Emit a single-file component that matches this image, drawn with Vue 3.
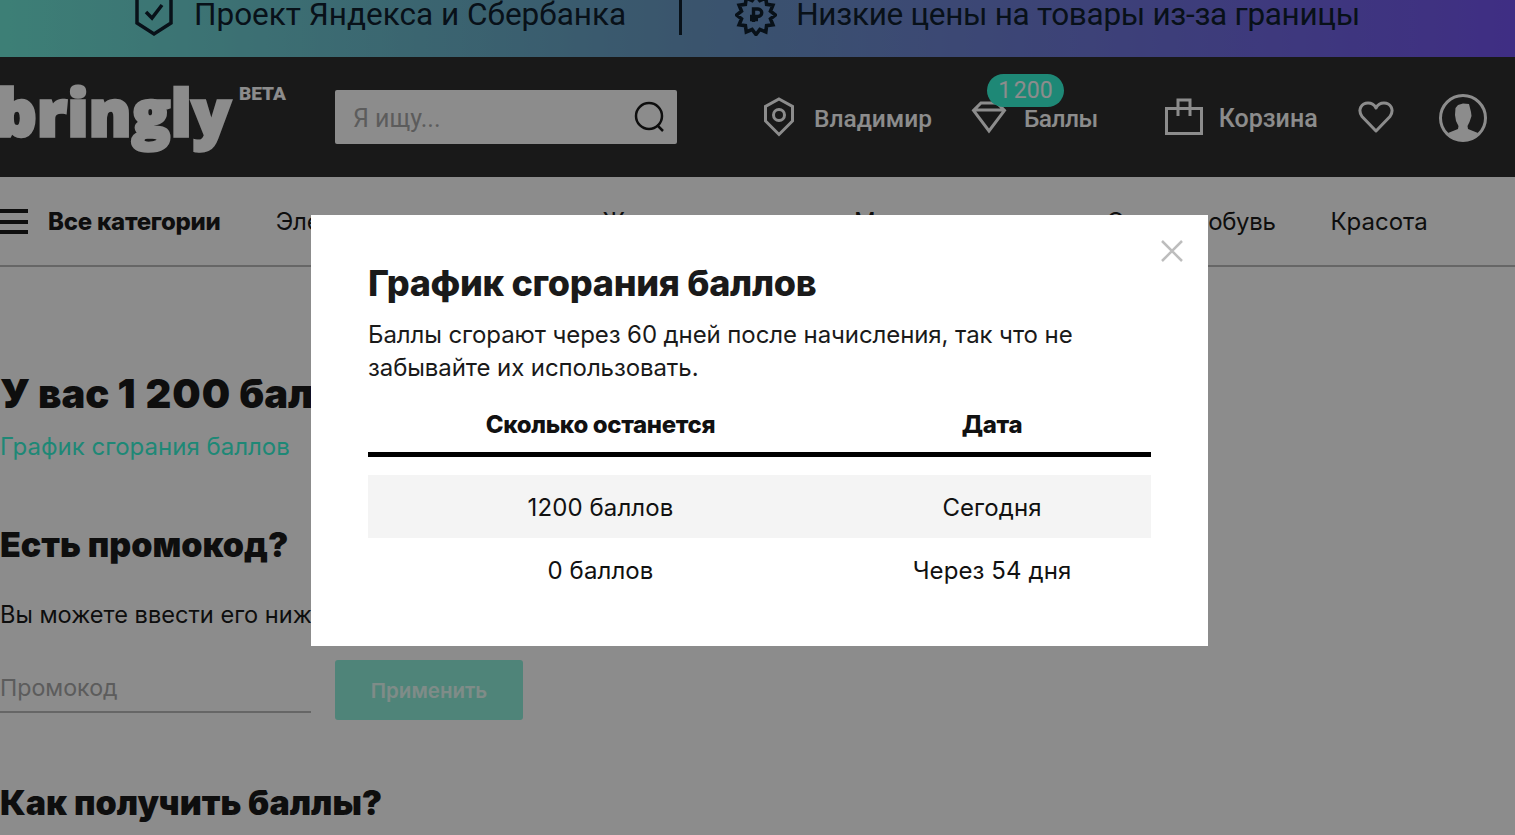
<script setup>
import { ref, computed } from 'vue';

const categories = ref(['Электроника и техника', 'Женская одежда', 'Мужская одежда', 'Сумки и обувь', 'Красота']);

const schedule = ref([
  { left: '1200 баллов', date: 'Сегодня' },
  { left: '0 баллов', date: 'Через 54 дня' },
]);

// rosette behind the rouble sign
const rosette = computed(() => {
  const points = [];
  for (let i = 0; i < 24; i++) {
    const radius = i % 2 === 0 ? 19.5 : 15;
    const angle = (Math.PI * i) / 12;
    points.push(`${(21 + radius * Math.sin(angle)).toFixed(1)},${(21 - radius * Math.cos(angle)).toFixed(1)}`);
  }
  return points.join(' ');
});
</script>

<template>
  <div class="page">
    <div class="promo">
      <div class="promo-item">
        <svg class="promo-shield" width="38" height="52" viewBox="0 0 38 52" fill="none" stroke="#10202e" stroke-width="3.5">
          <path d="M2 2V38L19 49L36 38V2" />
          <path d="M11 27L17 33L27 20" stroke-width="3.5" />
        </svg>
        <span>Проект Яндекса и Сбербанка</span>
      </div>
      <i class="promo-divider"></i>
      <div class="promo-item second">
        <svg class="promo-badge" width="42" height="42" viewBox="0 0 42 42" fill="none" stroke="#10202e">
          <polygon :points="rosette" stroke-width="3.6" stroke-linejoin="miter" />
          <path stroke-width="3.4" d="M18.500 28V15H23A3.600 3.600 0 0 1 23 22.500H15M15 25.500H23" />
        </svg>
        <span>Низкие цены на товары из-за границы</span>
      </div>
    </div>

    <header class="header">
      <div class="logo">
        <span class="logo-name">bringly</span>
        <span class="logo-beta">BETA</span>
      </div>
      <div class="search">
        <span class="search-text">Я ищу...</span>
        <svg width="32" height="32" viewBox="0 0 32 32" fill="none" stroke="#1a1a1a" stroke-width="2.500">
          <circle cx="15" cy="15" r="13" />
          <path d="M23 24L29 30" />
        </svg>
      </div>
      <div class="header-links">
        <a class="header-link city">
          <svg width="32" height="40" viewBox="0 0 32 40" fill="none" stroke="#fff" stroke-width="3">
            <path d="M16 2L29.500 9.500V24L16 37.500L2.500 24V9.500Z" />
            <circle cx="16" cy="18" r="5.500" />
          </svg>
          <span>Владимир</span>
        </a>
        <a class="header-link points">
          <svg width="36" height="34" viewBox="0 0 36 34" fill="none" stroke="#fff" stroke-width="3">
            <path d="M10 3H26L33.500 10.500L18 31L2.500 10.500ZM2.500 10H33.500" />
          </svg>
          <span>Баллы</span>
          <em class="points-badge">1 200</em>
        </a>
        <a class="header-link cart">
          <svg width="38" height="37" viewBox="0 0 38 37" fill="none" stroke="#fff" stroke-width="3">
            <path d="M1.500 10.500H36.500V35.500H1.500ZM13 18V2H25V18" />
          </svg>
          <span>Корзина</span>
        </a>
        <svg class="heart" width="36" height="32" viewBox="0 0 36 32" fill="none" stroke="#fff" stroke-width="3">
          <path d="M18 30L4 15.500C-1 8 4 2 10 2C14 2 16.500 4 18 7C19.500 4 22 2 26 2C32 2 37 8 32 15.500Z" stroke-linejoin="round" />
        </svg>
        <svg class="avatar" width="48" height="48" viewBox="0 0 48 48">
          <circle cx="24" cy="24" r="22.500" fill="none" stroke="#fff" stroke-width="3" />
          <path fill="#fff" d="M19 11L24 9.500L30 10L32 18L32.500 22L30.500 28L28.500 32L29 35L39 39C35 44 29 46 24 46C19 46 13 44 9 39L19 35L19.500 32L17 27L16 21L16.500 14Z" />
        </svg>
      </div>
    </header>

    <nav class="nav">
      <div class="nav-all">
        <span class="burger"><i></i><i></i><i></i></span>
        <b>Все категории</b>
      </div>
      <a v-for="category in categories" :key="category" class="nav-link">{{ category }}</a>
    </nav>

    <main class="content">
      <h1>У вас <span class="points-total">1 200</span> баллов</h1>
      <a class="schedule-link">График сгорания баллов</a>

      <h2 class="promo-title">Есть промокод?</h2>
      <p class="promo-text">Вы можете ввести его ниже и получить скидку</p>
      <div class="promo-form">
        <div class="promo-input">Промокод</div>
        <button class="promo-apply">Применить</button>
      </div>

      <h2 class="how-title">Как получить баллы?</h2>
    </main>

    <div class="overlay">
      <div class="modal">
        <svg class="modal-close" width="22" height="22" viewBox="0 0 22 22" stroke="#bdbdbd" stroke-width="2.500">
          <path d="M1 1L21 21M21 1L1 21" />
        </svg>
        <h3>График сгорания баллов</h3>
        <p>Баллы сгорают через 60 дней после начисления, так что не забывайте их использовать.</p>
        <table>
          <thead>
            <tr>
              <th class="col-left">Сколько останется</th>
              <th>Дата</th>
            </tr>
          </thead>
          <tbody>
            <tr v-for="row in schedule" :key="row.left">
              <td>{{ row.left }}</td>
              <td>{{ row.date }}</td>
            </tr>
          </tbody>
        </table>
      </div>
    </div>
  </div>
</template>

<style>
html, body {
  margin: 0;
  height: 100%;
  overflow: hidden;
}
</style>

<style scoped>
.page {
  height: 835px;
  overflow: hidden;
  background: #fff;
  color: #1a1a1a;
  font-family: Inter, "Noto Sans", sans-serif;
}
.promo {
  height: 57px;
  display: flex;
  align-items: flex-end;
  padding-left: 135px;
  overflow: hidden;
  box-sizing: border-box;
  background: linear-gradient(90deg, #6fe8d8 0%, #6a9bc6 45%, #7454f0 100%);
  color: #10202e;
  font-family: Roboto, sans-serif;
  font-size: 31.500px;
}
.promo-item {
  display: flex;
  align-items: flex-end;
  height: 57px;
  padding-bottom: 20px;
  box-sizing: border-box;
  white-space: nowrap;
}
.promo-item span {
  line-height: 38px;
  margin-bottom: 3px;
}
.second span {
  letter-spacing: -0.3px;
}
.promo-shield {
  margin-right: 21px;
  flex: none;
}
.promo-badge {
  margin: 0 19px 1px 0;
  flex: none;
}
.promo-divider {
  width: 3px;
  height: 35px;
  margin: 0 53px 22px 53px;
  background: #10202e;
  align-self: flex-end;
}
.header {
  height: 120px;
  display: flex;
  align-items: center;
  background: #2e2e2e;
}
.logo {
  width: 335px;
  height: 120px;
  flex: none;
  position: relative;
  overflow: hidden;
}
.logo-name {
  position: absolute;
  left: -4px;
  top: 10px;
  color: #fff;
  font-family: "Open Sans", sans-serif;
  font-weight: 800;
  font-size: 63px;
  letter-spacing: 0.800px;
  line-height: 90px;
  -webkit-text-stroke: 3.500px #fff;
}
.logo-beta {
  position: absolute;
  left: 239px;
  top: 27px;
  color: #fff;
  font-family: Roboto, sans-serif;
  font-weight: 900;
  font-size: 19px;
  line-height: 20px;
}
.search {
  width: 342px;
  height: 54px;
  flex: none;
  display: flex;
  align-items: center;
  justify-content: space-between;
  padding: 0 11px 0 18px;
  box-sizing: border-box;
  background: #fff;
  border-radius: 2px;
}
.search-text {
  margin-top: 2px;
  color: #a8a8a8;
  font-family: Roboto, sans-serif;
  font-size: 25px;
}
.header-links {
  flex: 1;
  display: flex;
  align-items: center;
  padding-left: 86px;
  color: #fff;
  font-family: Roboto, sans-serif;
  font-size: 24.500px;
  font-weight: 500;
}
.header-link {
  position: relative;
  display: flex;
  align-items: center;
  white-space: nowrap;
}
.header-link span {
  margin-top: 3px;
}
.city svg {
  margin-right: 19px;
}
.city {
  margin-right: 39px;
}
.points svg {
  margin-right: 17px;
}
.points {
  margin-right: 67px;
  letter-spacing: -0.5px;
}
.points-badge {
  position: absolute;
  left: 16px;
  top: -26px;
  width: 77px;
  height: 33px;
  border-radius: 17px;
  display: flex;
  align-items: center;
  justify-content: center;
  background: #38f8d8;
  font-size: 23px;
  font-style: normal;
  font-weight: 400;
  letter-spacing: 0;
  word-spacing: -3px;
}
.cart svg {
  margin: -1px 16px 0 0;
}
.cart {
  margin-right: 40px;
  font-size: 25px;
}
.heart {
  margin: -1px 45px 0 0;
}
.avatar {
  margin-top: 1px;
}
.nav {
  height: 90px;
  display: flex;
  align-items: center;
  gap: 55px;
  padding-top: 1px;
  box-sizing: border-box;
  border-bottom: 2px solid #bbb;
  font-size: 24px;
  white-space: nowrap;
}
.nav-all {
  display: flex;
  align-items: center;
  gap: 20px;
}
.nav-all b {
  font-weight: 800;
  letter-spacing: -0.25px;
}
.burger {
  width: 28px;
  display: flex;
  flex-direction: column;
  gap: 6.500px;
}
.burger i {
  height: 4px;
  background: #1a1a1a;
}
.nav-link {
  color: #1a1a1a;
}
.nav-link:nth-child(2) {
  letter-spacing: -0.1px;
}
.nav-link:nth-child(3) {
  letter-spacing: -0.35px;
}
.nav-link:nth-child(4) {
  letter-spacing: -0.56px;
}
.nav-link:nth-child(5) {
  letter-spacing: -0.35px;
}
.content {
  padding-top: 101px;
}
h1 {
  margin: 0;
  font-size: 40px;
  line-height: 52px;
  font-weight: 900;
  white-space: nowrap;
}
.points-total {
  letter-spacing: 1px;
}
.schedule-link {
  display: block;
  margin-top: 11px;
  color: #38f8d8;
  font-size: 24px;
  line-height: 32px;
}
h2 {
  margin: 0;
  font-size: 34px;
  line-height: 44px;
  font-weight: 900;
}
.promo-title {
  margin-top: 60px;
}
.promo-text {
  margin: 33px 0 0;
  font-size: 23.600px;
  line-height: 30px;
  white-space: nowrap;
}
.promo-form {
  display: flex;
  align-items: flex-start;
  margin-top: 30px;
}
.promo-input {
  width: 311px;
  height: 51px;
  line-height: 56px;
  color: #a8a8a8;
  font-size: 23.200px;
  border-bottom: 2px solid #bbb;
}
.promo-apply {
  width: 188px;
  height: 60px;
  margin-left: 24px;
  padding-top: 2px;
  border: none;
  border-radius: 3px;
  background: #91f0dc;
  color: #e8fff8;
  font-family: inherit;
  font-size: 20.500px;
  font-weight: 600;
}
.how-title {
  margin-top: 61px;
}
.overlay {
  position: fixed;
  inset: 0;
  display: flex;
  justify-content: center;
  align-items: flex-start;
  padding-top: 215px;
  box-sizing: border-box;
  background: rgba(0, 0, 0, 0.45);
}
.modal {
  position: relative;
  width: 897px;
  height: 431px;
  margin-left: 4px;
  padding: 45px 57px 0;
  box-sizing: border-box;
  background: #fff;
}
.modal-close {
  position: absolute;
  top: 25px;
  right: 25px;
}
h3 {
  margin: 0;
  font-size: 36px;
  line-height: 46px;
  font-weight: 800;
  letter-spacing: -0.3px;
  color: #1a1a1a;
}
.modal p {
  margin: 12px 0 0;
  width: 740px;
  font-size: 24px;
  line-height: 33px;
  letter-spacing: -0.09px;
  color: #1a1a1a;
}
table {
  width: 100%;
  margin-top: 17px;
  border-collapse: separate;
  border-spacing: 0;
  table-layout: fixed;
  font-size: 24px;
}
th {
  height: 56px;
  padding: 0 0 5px;
  font-weight: 800;
  letter-spacing: -0.35px;
  color: #111;
  box-sizing: border-box;
  border-bottom: 5px solid #000;
}
.col-left {
  width: 465px;
}
td {
  height: 63px;
  padding: 2px 0 0;
  text-align: center;
  color: #111;
  box-sizing: border-box;
  letter-spacing: 0.1px;
}
tbody tr:first-child td {
  height: 81px;
  background: #f4f4f4;
  border-top: 18px solid #fff;
}
</style>
